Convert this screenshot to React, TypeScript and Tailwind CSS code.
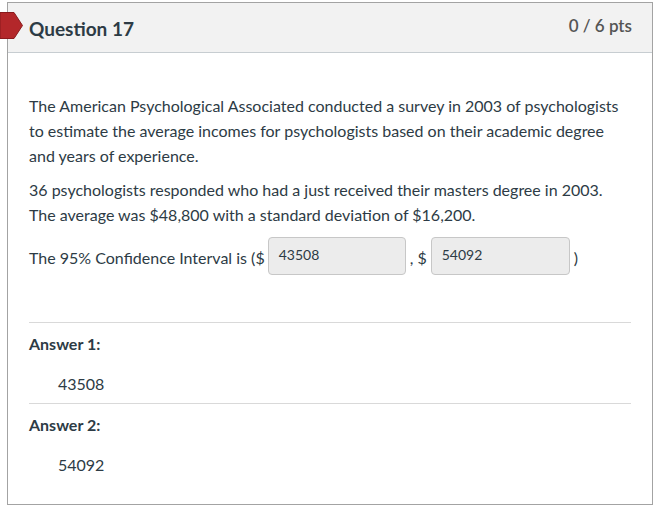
export default function App() {
    return (
        <div className="relative w-[658px] h-[512px] bg-white text-[#2d3b45]" style={{ fontFamily: 'Lato, "Open Sans", sans-serif' }}>
            <div className="absolute left-0 top-[12px] z-10">
                <svg width="24" height="28" viewBox="0 0 24 28">
                    <path d="M0 0.5 H14 L22.5 13.5 L14 26.5 H0 Z" fill="#b3272a" stroke="#8a1a1c" strokeWidth="1" />
                </svg>
            </div>
            <div className="ml-[7px] pt-[2px]">
                <div className="w-[646px] h-[503px] border border-[#a3a3a3] flex flex-col">
                    <div className="h-[50px] bg-[#f2f2f2] border-b border-[#c7cdd1] flex items-center justify-between pl-[21px] pr-[20px]">
                        <h2 className="text-[19px] font-bold mt-[3px]">Question 17</h2>
                        <span className="text-[17px] font-semibold text-[#555555] mt-[-4px]">0 / 6 pts</span>
                    </div>
                    <div className="px-[21px] pt-[40px] text-[16px] leading-[25px]">
                        <p>
                            The American Psychological Associated conducted a survey in 2003 of psychologists to estimate the average incomes for psychologists based on their academic degree and years of experience.
                        </p>
                        <p className="mt-[9px]">
                            36 psychologists responded who had a just received their masters degree in 2003. The average was $48,800 with a standard deviation of $16,200.
                        </p>
                        <div className="mt-[10px] flex items-start">
                            <span className="mt-[8px]">The 95% Confidence Interval is ($</span>
                            <div className="ml-[3px] w-[138px] h-[38px] bg-[#ececec] border border-[#c7c7c7] rounded-[4px] px-[10px] pt-[8px] text-[14px] leading-[18px]">43508</div>
                            <span className="mt-[8px] ml-[4px]">, $</span>
                            <div className="ml-[4px] w-[139px] h-[38px] bg-[#ececec] border border-[#c7c7c7] rounded-[4px] px-[10px] pt-[8px] text-[14px] leading-[18px]">54092</div>
                            <span className="mt-[8px] ml-[4px]">)</span>
                        </div>
                        <div className="mt-[47px] border-t border-[#d9d9d9]">
                            <div className="pt-[8px] font-bold leading-[25px]">Answer 1:</div>
                            <div className="pl-[29px] pt-[15px] pb-[7px] leading-[25px]">43508</div>
                        </div>
                        <div className="border-t border-[#d9d9d9]">
                            <div className="pt-[8px] font-bold leading-[25px]">Answer 2:</div>
                            <div className="pl-[29px] pt-[15px] leading-[25px]">54092</div>
                        </div>
                    </div>
                </div>
            </div>
        </div>
    );
}
